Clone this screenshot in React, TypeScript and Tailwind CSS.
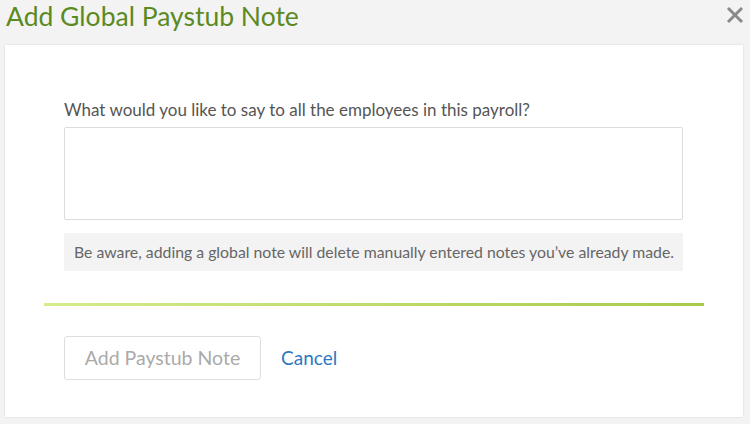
import React from "react";

export default function App() {
  return (
    <div className="w-[750px] h-[424px] bg-[#f3f3f3] overflow-hidden" style={{ fontFamily: "Lato, 'Open Sans', sans-serif" }}>
      <div className="flex items-start justify-between h-[45px] pl-[6px] pr-[6px]">
        <h1 className="text-[26.5px] leading-[26px] mt-[3px] text-[#5b8a1f] font-normal">Add Global Paystub Note</h1>
        <svg width="18" height="18" viewBox="0 0 18 18" className="mt-[6px]">
          <path d="M2 2 L16 16 M16 2 L2 16" stroke="#8a8a8a" strokeWidth="3" strokeLinecap="butt" />
        </svg>
      </div>
      <div className="ml-[5px] w-[738px] h-[372px] bg-white shadow-[0_0_2px_rgba(0,0,0,0.12)] pt-[55px]">
        <div className="ml-[59px] w-[619px]">
          <div className="text-[17px] leading-[20px] text-[#555] mb-[7px]">What would you like to say to all the employees in this payroll?</div>
          <div className="h-[93px] border border-[#dcdcdc] rounded-[2px]"></div>
          <div className="mt-[13px] h-[38px] bg-[#f3f3f3] rounded-[2px] flex items-center px-[10px] text-[15.8px] text-[#666] whitespace-nowrap">Be aware, adding a global note will delete manually entered notes you’ve already made.</div>
        </div>
        <div className="ml-[39px] w-[660px] h-[3px] mt-[32px] bg-gradient-to-r from-[#d4ec8a] to-[#a9c94c]"></div>
        <div className="flex items-center mt-[30px] ml-[59px] gap-[20px]">
          <div className="w-[197px] h-[44px] border border-[#dedede] rounded-[3px] flex items-center justify-center text-[19.5px] text-[#aaa]">Add Paystub Note</div>
          <div className="text-[19px] text-[#2d79bd]">Cancel</div>
        </div>
      </div>
    </div>
  );
}
